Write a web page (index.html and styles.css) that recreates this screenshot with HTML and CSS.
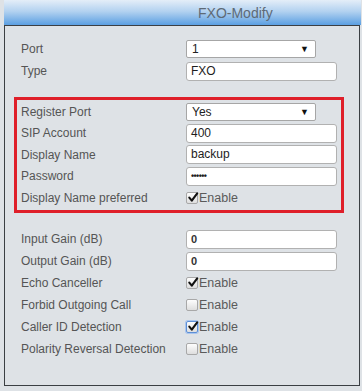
FILE: index.html
```html
<!DOCTYPE html>
<html>
<head>
<meta charset="utf-8">
<link rel="stylesheet" href="styles.css">
</head>
<body>
<div class="wrap">
  <div class="header"><span class="title">FXO-Modify</span></div>
  <div class="panel">
    <div class="group top">
      <div class="row"><span class="lbl">Port</span><div class="select">1<span class="arrow">▼</span></div></div>
      <div class="row"><span class="lbl">Type</span><div class="input">FXO</div></div>
    </div>
    <div class="redbox">
      <div class="row r"><span class="lbl">Register Port</span><div class="select">Yes<span class="arrow">▼</span></div></div>
      <div class="row r"><span class="lbl">SIP Account</span><div class="input">400</div></div>
      <div class="row r"><span class="lbl">Display Name</span><div class="input">backup</div></div>
      <div class="row r"><span class="lbl">Password</span><div class="input pw">••••••</div></div>
      <div class="row r"><span class="lbl">Display Name preferred</span><span class="cb on"><svg viewBox="0 0 12 12" width="12" height="12"><path d="M2.3 5.6 L4.8 8.6 L10.2 1.4" fill="none" stroke="#111" stroke-width="2.1" stroke-linecap="round" stroke-linejoin="round"/></svg></span><span class="en">Enable</span></div>
    </div>
    <div class="group bottom">
      <div class="row"><span class="lbl">Input Gain (dB)</span><div class="input num">0</div></div>
      <div class="row"><span class="lbl">Output Gain (dB)</span><div class="input num">0</div></div>
      <div class="row"><span class="lbl">Echo Canceller</span><span class="cb on"><svg viewBox="0 0 12 12" width="12" height="12"><path d="M2.3 5.6 L4.8 8.6 L10.2 1.4" fill="none" stroke="#111" stroke-width="2.1" stroke-linecap="round" stroke-linejoin="round"/></svg></span><span class="en">Enable</span></div>
      <div class="row"><span class="lbl">Forbid Outgoing Call</span><span class="cb"></span><span class="en">Enable</span></div>
      <div class="row"><span class="lbl">Caller ID Detection</span><span class="cb on focus"><svg viewBox="0 0 12 12" width="12" height="12"><path d="M2.3 5.6 L4.8 8.6 L10.2 1.4" fill="none" stroke="#111" stroke-width="2.1" stroke-linecap="round" stroke-linejoin="round"/></svg></span><span class="en">Enable</span></div>
      <div class="row"><span class="lbl">Polarity Reversal Detection</span><span class="cb"></span><span class="en">Enable</span></div>
    </div>
  </div>
</div>
</body>
</html>
```
FILE: styles.css
```css
html, body {
  margin: 0;
  padding: 0;
  background: #dee2e6;
  font-family: "Liberation Sans", Arial, sans-serif;
  font-size: 12px;
  color: #555;
}
.wrap {
  padding-left: 4px;
  width: 356px;
}
.header {
  height: 25px;
  width: 357px;
  background: linear-gradient(#e4eef8, #b3d2f0 45%, #5b9fe2);
  box-sizing: border-box;
  padding-left: 194px;
  line-height: 26px;
}
.title {
  font-size: 14px;
  color: #5e6a76;
}
.panel {
  border: 1px solid #3b3f43;
  box-sizing: border-box;
  width: 356px;
  height: 361px;
}
.group {
  padding-left: 16px;
}
.group.top {
  padding-top: 12px;
}
.row {
  display: flex;
  align-items: center;
  height: 22px;
}
.row.r {
  height: 21.5px;
}
.lbl {
  width: 165px;
  flex: none;
  color: #555;
}
.redbox {
  margin: 15px 0 0 9px;
  width: 330px;
  box-sizing: border-box;
  border: 3px solid #df1f2a;
  padding: 1px 0 1.5px 4px;
}
.group.bottom {
  margin-top: 15px;
}
.select {
  position: relative;
  width: 130px;
  height: 18px;
  box-sizing: border-box;
  border: 1px solid #a6a6a6;
  border-radius: 2px;
  background: #fff;
  color: #222;
  padding-left: 5px;
  line-height: 16px;
  font-size: 12px;
}
.arrow {
  position: absolute;
  right: 6px;
  top: 0;
  font-size: 9px;
  color: #111;
}
.input {
  width: 151px;
  height: 19px;
  box-sizing: border-box;
  border: 1px solid #b1b1b1;
  border-radius: 3px;
  background: #fff;
  color: #1d1d1d;
  padding-left: 4px;
  line-height: 17px;
  font-size: 12px;
}
.input.pw {
  font-size: 9px;
  letter-spacing: -0.6px;
  font-weight: bold;
}
.input.num {
  font-size: 11px;
  font-weight: bold;
  color: #333;
}
.cb {
  flex: none;
  width: 12px;
  height: 12px;
  box-sizing: border-box;
  border: 1px solid #a8a8a8;
  border-radius: 2px;
  background: linear-gradient(#fdfdfd, #dedede);
  position: relative;
  margin-right: 1px;
}
.cb svg {
  position: absolute;
  left: 0;
  top: -1px;
}
.cb.focus {
  border: 1px solid #5d8fd6;
  box-shadow: 0 0 0 1px #a9c5ee;
}
.en {
  color: #5a5a5a;
  font-size: 12.5px;
}
```
